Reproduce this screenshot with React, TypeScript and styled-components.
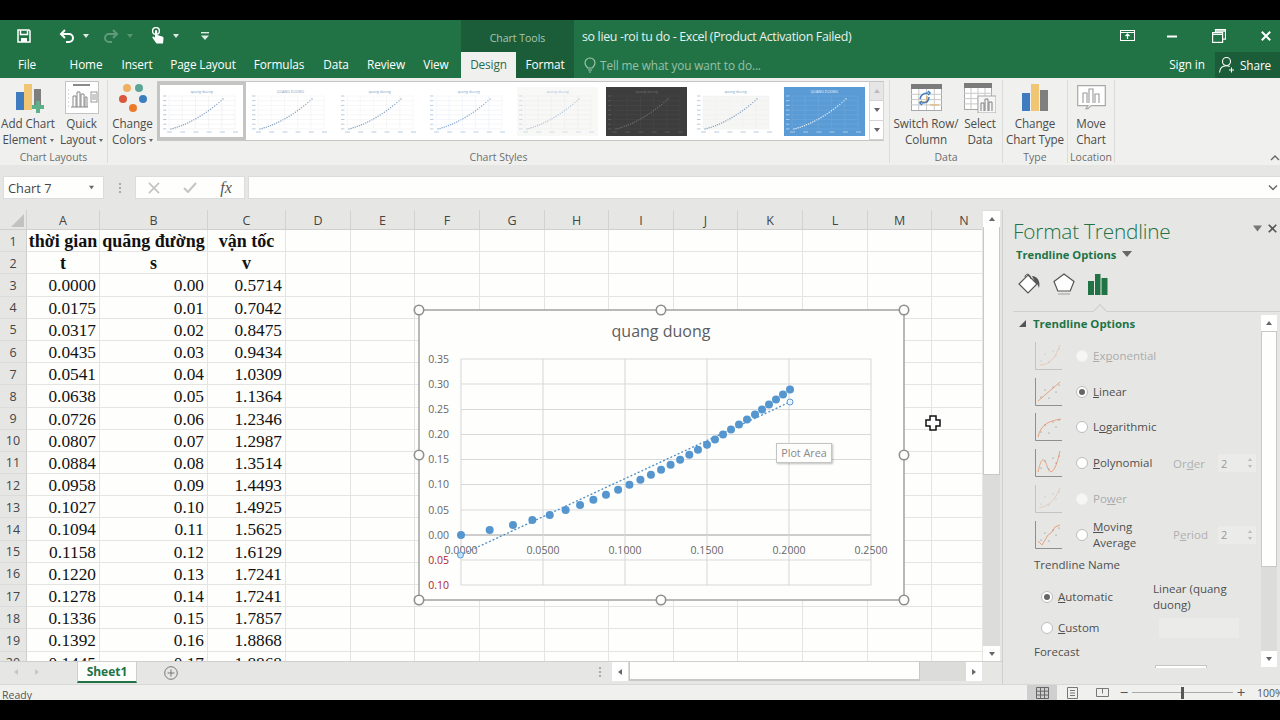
import React from "react";
import styled, { createGlobalStyle } from "styled-components";

const UI = `"Open Sans", "Noto Sans", "Liberation Sans", sans-serif`;
const GREEN = "#217346";
const DARK_GREEN = "#1c5d39";
const RIBBON = "#f0f1ef";
const SHELL = "#e6e7e5";

const Global = createGlobalStyle`
  html, body { margin: 0; padding: 0; background: #000; }
  * { box-sizing: border-box; }
  #root { width: 1280px; height: 720px; overflow: hidden; }
`;

const Frame = styled.div`
  width: 1280px; height: 720px; display: flex; flex-direction: column;
  background: #000; font-family: ${UI}; overflow: hidden;
`;
const BlackBand = styled.div`height: 20px; flex: none; background: #000;`;

/* Title bar */
const TitleRow = styled.div`height: 32px; flex: none; display: flex; background: ${GREEN}; color: #fff;`;
const Qat = styled.div`width: 461px; flex: none; display: flex; align-items: center;`;
const QatSlot = styled.div<{ $w: number; $ml: number; $dim?: boolean }>`
  width: ${p => p.$w}px; margin-left: ${p => p.$ml}px; display: flex; justify-content: center;
  align-items: center; height: 20px; opacity: ${p => (p.$dim ? 0.28 : 1)};
`;
const ChartToolsLabel = styled.div`
  width: 113px; flex: none; background: ${DARK_GREEN}; color: #a9c8b5; font-size: 10.5px;
  display: flex; align-items: center; justify-content: center; padding-top: 3px;
`;
const DocTitle = styled.div`
  flex: 1; padding: 1px 0 0 8px; font-size: 12.4px; line-height: 32px; color: #e8f1ec; white-space: nowrap; letter-spacing: -0.33px;
`;
const WinControls = styled.div`display: flex; align-items: center; width: 172px; flex: none;`;
const WinSlot = styled.div<{ $w: number; $pl?: number }>`
  width: ${p => p.$w}px; flex: none; display: flex; justify-content: center; align-items: center;
  padding-left: ${p => p.$pl ?? 0}px;
`;

const TabRow = styled.div`height: 26px; flex: none; display: flex; background: ${GREEN}; color: #fff; letter-spacing: -0.12px;`;
const Tab = styled.div<{ $w: number; $pl?: number; $mode?: "active" | "dark" }>`
  width: ${p => p.$w}px; flex: none; text-align: center; font-size: 11.8px; line-height: 25px;
  padding-left: ${p => p.$pl ?? 0}px;
  background: ${p => (p.$mode === "active" ? RIBBON : p.$mode === "dark" ? DARK_GREEN : "transparent")};
  color: ${p => (p.$mode === "active" ? "#2b6a48" : "#fff")};
`;
const TellMe = styled.div`
  flex: 1; display: flex; align-items: center; gap: 4px; padding-left: 10px; color: #98c0a9; font-size: 11.8px;
`;
const SignIn = styled.div`width: 60px; text-align: center; font-size: 11.8px; line-height: 25px; padding-left: 4px;`;
const ShareBtn = styled.div`
  width: 65px; flex: none; background: ${DARK_GREEN}; display: flex; align-items: center; gap: 4px;
  padding-left: 3px; font-size: 11.8px;
`;

/* Ribbon */
const Ribbon = styled.div`height: 87px; flex: none; display: flex; background: ${RIBBON}; color: #4c4c4c;`;
const Group = styled.div<{ $w: number }>`
  width: ${p => p.$w}px; flex: none; display: flex; flex-direction: column; border-right: 1px solid #dcdddb;
  margin: 2px 0;
`;
const GroupBody = styled.div`height: 69px; flex: none; display: flex;`;
const GroupLabel = styled.div`flex: 1; text-align: center; font-size: 10.5px; line-height: 16px; color: #6d6d6d; white-space: nowrap;`;
const RibbonBtn = styled.div<{ $w: number }>`
  width: ${p => p.$w}px; flex: none; display: flex; flex-direction: column; align-items: center;
`;
const BtnIcon = styled.div<{ $shift?: number }>`
  height: 35px; flex: none; display: flex; align-items: center; justify-content: center;
  padding-left: ${p => p.$shift ?? 0}px;
`;
const BtnLabel = styled.div`font-size: 11.7px; line-height: 16px; text-align: center; white-space: nowrap; letter-spacing: -0.1px;`;
const Caret = styled.span`
  display: inline-block; width: 0; height: 0; margin-left: 3px; vertical-align: 2px;
  border-left: 2.5px solid transparent; border-right: 2.5px solid transparent; border-top: 3px solid #666;
`;
const Gallery = styled.div`
  width: 727px; height: 60px; margin-top: 1px; flex: none; display: flex; background: #fff;
  border-top: 1px solid #c6c6c6; border-bottom: 1px solid #c6c6c6; box-shadow: inset 1px 0 0 #c6c6c6;
`;
const ThumbItem = styled.div<{ $sel?: boolean }>`
  width: 89px; flex: none; height: 58px; display: flex; align-items: center; justify-content: center;
  border: 3px solid ${p => (p.$sel ? "#c4c5c3" : "transparent")};
`;
const GalleryScroll = styled.div`
  width: 15px; flex: none; display: flex; flex-direction: column;
  border-left: 1px solid #d4d4d4; border-right: 1px solid #d4d4d4;
`;
const GalleryBtn = styled.div<{ $off?: boolean }>`
  flex: 1; display: flex; align-items: center; justify-content: center;
  background: ${p => (p.$off ? "#e6e6e6" : "#fff")}; border-bottom: 1px solid #d4d4d4;
`;
const RibbonEnd = styled.div`flex: 1; display: flex; justify-content: flex-end; align-items: flex-end;`;

/* Formula bar */
const FormulaBar = styled.div`
  height: 45px; flex: none; background: ${SHELL}; display: flex; align-items: flex-start; padding-top: 11px;
`;
const NameBox = styled.div`
  width: 101px; height: 23px; margin-left: 3px; background: #fefefd; display: flex; align-items: center;
  justify-content: space-between; padding: 0 9px 0 4px; font-size: 12.8px; color: #444;
  border: 1px solid #dcdcdc;
`;
const GripDots = styled.div`
  width: 31px; height: 23px; display: flex; flex-direction: column; gap: 2px; align-items: center; justify-content: center;
  span { width: 2px; height: 2px; background: #aaa; }
`;
const FxBox = styled.div`
  width: 110px; height: 23px; background: #fefefd; display: flex; align-items: center; border: 1px solid #dcdcdc;
`;
const FxSlot = styled.div`flex: 1; display: flex; justify-content: center; align-items: center;`;
const FxGlyph = styled.span`font-family: "Liberation Serif", serif; font-style: italic; font-size: 16px; color: #555; font-weight: 400;`;
const FormulaInput = styled.div`
  flex: 1; height: 23px; margin-left: 3px; background: #fefefd; border: 1px solid #dcdcdc; border-right: 0;
  display: flex; align-items: center; justify-content: flex-end; padding-right: 2px;
`;

/* Sheet */
const Main = styled.div`height: 474px; flex: none; display: flex; background: ${SHELL};`;
const SheetArea = styled.div`width: 1003px; flex: none; display: flex; flex-direction: column; border-right: 1px solid #cfcfcf;`;
const SheetTop = styled.div`height: 451px; flex: none; display: flex;`;
const GridWrap = styled.div`width: 982px; flex: none; position: relative; overflow: hidden; background: #fefefd;`;
const Grid = styled.div`
  display: grid; grid-template-columns: 27px 73px 108px 78px 65px 64px 65px 65px 64px 65px 64px 65px 65px 64px 65px;
  grid-template-rows: 20px; grid-auto-rows: 22.2px;
`;
const Corner = styled.div`
  background: ${SHELL}; border-right: 1px solid #cfcfcf; border-bottom: 1px solid #cfcfcf; position: relative;
  &::after {
    content: ""; position: absolute; right: 2px; bottom: 2px; width: 0; height: 0;
    border-left: 13px solid transparent; border-bottom: 13px solid #c2c2c2;
  }
`;
const ColHead = styled.div`
  background: ${SHELL}; color: #444; font-size: 12.5px; line-height: 21px; text-align: center;
  border-right: 1px solid #d2d2d2; border-bottom: 1px solid #cfcfcf; overflow: hidden;
`;
const RowHead = styled.div`
  background: ${SHELL}; color: #444; font-size: 12.5px; display: flex; align-items: center; justify-content: center;
  padding-top: 1px; border-right: 1px solid #cfcfcf; border-bottom: 1px solid #dcdcdc;
`;
const Cell = styled.div<{ $head?: boolean }>`
  font-family: "Liberation Serif", serif; font-size: ${p => (p.$head ? 18 : 17.3)}px; color: #111; white-space: nowrap;
  font-weight: ${p => (p.$head ? 700 : 400)}; text-align: ${p => (p.$head ? "center" : "right")};
  padding: 0 ${p => (p.$head ? 0 : 3)}px 0 0; line-height: 23px; border-right: 1px solid #e4e4e2; border-bottom: 1px solid #e4e4e2;
`;
const ChartLayer = styled.svg`position: absolute; left: 410px; top: 90px; width: 504px; height: 310px;`;
const CursorLayer = styled.svg`position: absolute; left: 925px; top: 205px; width: 16px; height: 16px;`;
const PlotTip = styled.div`
  position: absolute; left: 776px; top: 233px; width: 56px; height: 20px; background: #fdfdfb; border: 1px solid #c4c4c4;
  box-shadow: 1px 1px 2px rgba(0,0,0,.25); font-size: 10.8px; color: #8a8a8a; line-height: 18px; text-align: center;
`;
const VScroll = styled.div`
  width: 17px; margin-left: 1px; flex: none; display: flex; flex-direction: column; padding-top: 1px; background: #dcdddb;
`;
const ScrollBtn = styled.div<{ $h: number }>`
  height: ${p => p.$h}px; flex: none; background: #fff; display: flex; align-items: center; justify-content: center;
`;
const VThumb = styled.div<{ $h: number }>`
  height: ${p => p.$h}px; flex: none; background: #fefefd; border: 1px solid #c8c8c8; border-top: 0;
`;
const Track = styled.div`flex: 1; background: #dcdddb;`;

const SheetBottom = styled.div`flex: 1; display: flex; align-items: flex-start; border-top: 1px solid #cfcfcf;`;
const NavArrow = styled.div<{ $w: number }>`width: ${p => p.$w}px; height: 20px; flex: none; display: flex; align-items: center; justify-content: center;`;
const SheetTab = styled.div`
  width: 60px; flex: none; height: 21px; margin-left: 2px; background: #fefefd; border: 1px solid #cfcfcf; border-top: 0;
  border-bottom: 2px solid ${GREEN}; color: ${GREEN}; font-weight: 700; font-size: 12px; line-height: 20px; text-align: center;
`;
const AddSheet = styled.div`
  width: 14px; height: 14px; margin: 4px 0 0 27px; flex: none; display: flex; align-items: center; justify-content: center;
`;
const HScrollGrip = styled(GripDots)`width: 10px; height: 20px; margin-left: 417px; flex: none;`;
const HScroll = styled.div`width: 370px; height: 19px; margin-left: 7px; flex: none; display: flex; align-items: stretch; background: #dcdddb;`;
const HBtn = styled.div`width: 16px; flex: none; background: #fff; display: flex; align-items: center; justify-content: center;`;
const HThumb = styled.div`width: 291px; flex: none; margin-left: 1px; background: #fefefd; border: 1px solid #c8c8c8; border-top: 0; border-bottom: 2px solid #c8c8c8;`;

/* Pane */
const Pane = styled.div`flex: 1; display: flex; flex-direction: column; padding-left: 10px; overflow: hidden; color: #4a4a4a;`;
const PaneTitleRow = styled.div`height: 36px; flex: none; display: flex; padding-top: 8px;`;
const PaneTitle = styled.div`flex: 1; font-size: 20.8px; font-weight: 300; line-height: 26px; color: ${GREEN}; white-space: nowrap; letter-spacing: -0.2px;`;
const PaneClose = styled.div`width: 27px; flex: none; display: flex; align-items: flex-start; justify-content: space-between; padding: 6px 3px 0 0;`;
const PaneSub = styled.div`
  height: 16px; flex: none; margin-left: 3px; display: flex; align-items: center; gap: 6px; color: ${GREEN};
  font-size: 11.2px; font-weight: 700;
`;
const SubCaret = styled.span`width: 0; height: 0; border-left: 5px solid transparent; border-right: 5px solid transparent; border-top: 6px solid #666;`;
const PaneIcons = styled.div`height: 24px; margin-top: 10px; flex: none; display: flex; align-items: center;`;
const PaneIconSlot = styled.div`width: 34px; flex: none; display: flex; justify-content: center;`;
const PaneDivider = styled.div`
  height: 1px; flex: none; margin-top: 15px; background: #d0d0ce; position: relative;
  &::after {
    content: ""; position: absolute; left: 82px; top: -5px; width: 9px; height: 9px; transform: rotate(45deg);
    background: ${SHELL}; border-left: 1px solid #d0d0ce; border-top: 1px solid #d0d0ce;
  }
`;
const PaneBody = styled.div`height: 354px; margin-top: 3px; flex: none; display: flex; overflow: hidden;`;
const PaneContent = styled.div`width: 247px; height: 353px; overflow: hidden; flex: none; display: flex; flex-direction: column;`;
const SectionHead = styled.div`
  height: 16px; flex: none; display: flex; align-items: center; gap: 7px; padding-left: 6px; color: ${GREEN};
  font-size: 11.4px; font-weight: 700;
`;
const SectionTri = styled.span`width: 0; height: 0; border-left: 7px solid transparent; border-bottom: 7px solid #555;`;
const Options = styled.div`margin-top: 7px; display: grid; grid-auto-rows: 35.8px;`;
const OptRow = styled.div`display: flex; align-items: center; padding-left: 22px; font-size: 11.5px;`;
const OptIcon = styled.div<{ $off?: boolean }>`width: 28px; flex: none; display: flex; opacity: ${p => (p.$off ? 0.4 : 1)};`;
const Radio = styled.div<{ $on?: boolean; $off?: boolean }>`
  width: 12px; height: 12px; border-radius: 50%; flex: none; position: relative;
  background: ${p => (p.$off ? "#f6f6f5" : "#fff")}; border: 1px solid ${p => (p.$off ? "#f0f0ef" : "#bdbdbd")};
  &::after {
    content: ""; display: ${p => (p.$on ? "block" : "none")}; position: absolute; left: 2px; top: 2px;
    width: 6px; height: 6px; border-radius: 50%; background: #666;
  }
`;
const OptRadio = styled(Radio)`margin-left: 13px;`;
const OptText = styled.div<{ $off?: boolean }>`
  margin-left: 5px; line-height: 16px; color: ${p => (p.$off ? "#ababab" : "#4f4f4f")}; width: 80px; flex: none; white-space: nowrap;
`;
const Key = styled.span`text-decoration: underline; text-underline-offset: 1px;`;
const OrderLabel = styled.div`width: 45px; flex: none; color: #b0b0b0; white-space: nowrap;`;
const Spin = styled.div`
  width: 38px; height: 18px; flex: none; background: #ebebea; display: flex; align-items: center;
  justify-content: space-between; padding: 0 4px 0 3px; color: #999; font-size: 11px;
`;
const SpinArrows = styled.div`display: flex; flex-direction: column; gap: 4px;
  i { display: block; width: 0; height: 0; border-left: 2.5px solid transparent; border-right: 2.5px solid transparent; }
  i:first-child { border-bottom: 3px solid #bbb; }
  i:last-child { border-top: 3px solid #bbb; }
`;
const FieldLabel = styled.div<{ $mt: number }>`height: 16px; flex: none; margin: ${p => p.$mt}px 0 0 21px; font-size: 11.5px; line-height: 16px; color: #4f4f4f;`;
const NameRows = styled.div`display: grid; grid-template-columns: 112px 130px; grid-template-rows: 36px 26px; margin: 6px 0 0 28px; font-size: 11.5px; color: #4f4f4f;`;
const NameChoice = styled.div`display: flex; align-items: center; gap: 5px;`;
const LinearName = styled.div`line-height: 16px; padding-top: 2px;`;
const CustomInput = styled.div`width: 80px; height: 20px; margin: 3px 0 0 6px; background: #ebebea;`;
const ForecastBox = styled.div`width: 52px; height: 12px; margin: 5px 0 0 142px; flex: none; background: #fff; border: 1px solid #c6c6c6;`;
const PaneScroll = styled.div`width: 16px; height: 352px; margin-left: 1px; flex: none; display: flex; flex-direction: column; background: #d9dad8;`;
const PaneThumb = styled.div`height: 236px; flex: none; background: #fefefd; border: 1px solid #c8c8c8;`;

/* Status */
const Status = styled.div`
  height: 16px; flex: none; background: ${RIBBON}; border-top: 1px solid #d8d8d6; display: flex;
  overflow: hidden; color: #555; font-size: 10.5px;
`;
const Ready = styled.div`flex: 1; padding-left: 2px; line-height: 21px;`;
const StatusTools = styled.div`width: 253px; flex: none; display: flex; align-items: flex-start;`;
const ViewBtn = styled.div<{ $on?: boolean }>`
  width: 30px; height: 16px; flex: none; display: flex; align-items: center; justify-content: center;
  background: ${p => (p.$on ? "#cfcfcf" : "transparent")};
`;
const ZoomTrack = styled.div`
  width: 101px; height: 16px; flex: none; margin: 0 1px; position: relative;
  &::before { content: ""; position: absolute; left: 0; right: 0; top: 7px; height: 1px; background: #aaa; }
  &::after { content: ""; position: absolute; left: 49px; top: 2px; width: 3px; height: 12px; background: #555; }
`;
const ZoomSign = styled.div`width: 14px; flex: none; text-align: center; font-size: 15px; line-height: 14px; color: #555;`;
const ZoomPct = styled.div`margin-left: 9px; line-height: 17px; font-size: 10.5px; white-space: nowrap;`;

/* Drawings */
const Tri = ({ dir, c = "#666", s = 6 }: { dir: "u" | "d" | "l" | "r"; c?: string; s?: number }) => {
  const pts = { u: "0,5 3,1 6,5", d: "0,1 6,1 3,5", l: "5,0 5,6 1,3", r: "1,0 1,6 5,3" }[dir];
  return <svg width={s} height={s} viewBox="0 0 6 6"><polygon points={pts} fill={c} /></svg>;
};

const MiniCaret = () => <svg width="6" height="4" viewBox="0 0 6 4"><polygon points="0,0 6,0 3,4" fill="#fff" fillOpacity=".85" /></svg>;

const SaveIcon = () => (
  <svg width="16" height="16" viewBox="0 0 16 16" fill="none" stroke="#fff" strokeWidth="1.5">
    <path d="M2 2h11l1 1v11H2z" /><path d="M4.5 2.5v4h7v-4" /><rect x="5" y="10" width="6" height="4" fill="#fff" stroke="none" />
  </svg>
);
const UndoIcon = ({ flip }: { flip?: boolean }) => (
  <svg width="18" height="16" viewBox="0 0 18 16" fill="none" stroke="#fff" strokeWidth="2" style={flip ? { transform: "scaleX(-1)" } : undefined}>
    <path d="M7 2 3 6l4 4" /><path d="M3 6h8a4 4 0 0 1 0 8H8" />
  </svg>
);
const TouchIcon = () => (
  <svg width="16" height="18" viewBox="0 0 16 18" fill="#fff">
    <circle cx="6" cy="4" r="3.4" fill="none" stroke="#fff" strokeWidth="1.4" />
    <path d="M5 4.2a1.1 1.1 0 0 1 2.2 0V8l5 1.4c1 .3 1.4 1 1.3 2l-.5 5H6.5L2.6 11c-.7-1 .5-2.1 1.4-1.2l1 1z" />
  </svg>
);
const CustomizeIcon = () => (
  <svg width="8" height="9" viewBox="0 0 8 9" fill="#fff" fillOpacity=".85"><rect x="0" y="0" width="8" height="1.4" /><polygon points="0,3.5 8,3.5 4,8" /></svg>
);
const RibbonModeIcon = () => (
  <svg width="15" height="12" viewBox="0 0 15 12" fill="none" stroke="#fff" strokeWidth="1"><rect x=".5" y=".5" width="14" height="10" /><path d="M.5 2.5h14" /><path d="M7.5 9V4M5.5 6l2-2 2 2" strokeWidth="1.2" /></svg>
);
const Minimize = () => <svg width="12" height="3" viewBox="0 0 12 3"><rect width="10" height="2" y=".5" x="1" fill="#fff" /></svg>;
const Restore = () => (
  <svg width="14" height="14" viewBox="0 0 14 14" fill="none" stroke="#fff" strokeWidth="1.2"><rect x=".6" y="3.6" width="10" height="9.8" /><path d="M.6 5.4h10M3.5 3.5V.7h10v9.5h-2.8M3.5 2.2h10" /></svg>
);
const CloseX = ({ c = "#fff", s = 10, w = 2 }: { c?: string; s?: number; w?: number }) => (
  <svg width={s} height={s} viewBox="0 0 10 10" stroke={c} strokeWidth={w}><path d="M.8.8l8.4 8.4M9.2.8.8 9.2" /></svg>
);
const Bulb = () => (
  <svg width="12" height="16" viewBox="0 0 12 16" fill="none" stroke="#a3cab4" strokeWidth="1.1"><path d="M3.6 11C2.5 9.3 1 8.3 1 6a5 5 0 0 1 10 0c0 2.3-1.5 3.3-2.6 5z" /><path d="M4 13h4M5 15h2" /></svg>
);
const ShareUser = () => (
  <svg width="18" height="18" viewBox="0 0 18 18" fill="none" stroke="#fff" strokeWidth="1.1"><circle cx="8.5" cy="5.5" r="4" /><path d="M1.5 16.5c.3-4 3-6.8 7-6.8 1.3 0 2.3.3 3.2.8" /><path d="M13.5 11.5v5M11 14h5" /></svg>
);

const AddChartIcon = () => (
  <svg width="32" height="30" viewBox="0 0 32 30"><rect x="1" y="9" width="8" height="18" fill="#3f7cbf" /><rect x="9" y="1" width="8" height="26" fill="#f0c674" /><rect x="19" y="6" width="7" height="16" fill="#7f7f7f" /><path d="M21 18h4v4h4v4h-4v4h-4v-4h-4v-4h4z" fill="#5cb08a" /></svg>
);
const QuickLayoutIcon = () => (
  <svg width="34" height="33" viewBox="0 0 34 33" fill="none"><rect x=".5" y=".5" width="33" height="32" fill="#fff" stroke="#c4c4c4" /><rect x="8" y="3" width="17" height="2" fill="#8a8a8a" /><path d="M3 9h1M3 13h1M3 17h1M3 21h1M3 25h1" stroke="#bbb" /><path d="M6 26h17M8 26V15h3v11M12 26V11h3v15M16 26V13h3v13M20 26V16h2v10" stroke="#888" /><rect x="26" y="11" width="6" height="10" fill="#fff" stroke="#999" /><path d="M27 14h4M27 16h4M27 18h4" stroke="#999" /></svg>
);
const ChangeColorsIcon = () => (
  <svg width="30" height="30" viewBox="0 0 30 30"><circle cx="9" cy="5" r="4" fill="#efb062" /><circle cx="21" cy="5" r="4" fill="#5ca596" /><circle cx="5" cy="16" r="4" fill="#d9573a" /><circle cx="25" cy="16" r="4" fill="#3c7ebd" /><circle cx="15" cy="25" r="4" fill="#ec7a2b" /></svg>
);
const TableBase = ({ w }: { w: number }) => (
  <>
    <rect x=".5" y=".5" width={w - 1} height="26" fill="#fff" stroke="#a8a8a8" />
    <rect x="0" y="0" width={w} height="5" fill="#7b7b7b" />
    {[1, 2, 3].map(i => <path key={i} d={`M${(i * w) / 4} 5V26`} stroke="#c8c8c8" />)}
    {[1, 2, 3].map(i => <path key={i} d={`M0 ${5 + i * 5.3}H${w}`} stroke="#c8c8c8" />)}
  </>
);
const SwitchIcon = () => (
  <svg width="31" height="27" viewBox="0 0 31 27" fill="none"><TableBase w={31} /><path d="M8 18h8V12" stroke="#e0ad63" strokeWidth="1.5" /><path d="M19 21h9" stroke="#e0ad63" /><path d="M9 15c1-5 4-6 8-6M17 7l2 2-2 2M18 13c0 4-3 6-7 6M11 17l-2 2 2 2" stroke="#3f7cbf" strokeWidth="1.5" /></svg>
);
const SelectDataIcon = () => (
  <svg width="32" height="30" viewBox="0 0 32 30" fill="none"><TableBase w={28} /><rect x="14" y="13" width="18" height="17" fill="#f6f6f6" stroke="#a8a8a8" /><path d="M17 28v-8h3v8M21 28V16h3v12M25 28v-9h3v9" stroke="#7f7f7f" /></svg>
);
const ChangeTypeIcon = () => (
  <svg width="26" height="27" viewBox="0 0 26 27"><rect x="0" y="9" width="8" height="18" fill="#3f7cbf" /><rect x="9" y="0" width="8" height="27" fill="#f0c674" /><rect x="18" y="6" width="8" height="21" fill="#7f7f7f" /></svg>
);
const MoveChartIcon = () => (
  <svg width="29" height="25" viewBox="0 0 29 25" fill="none"><path d="M.7.7h27.6v20H14l-3 3H9l2-3H.7z" fill="#fff" stroke="#a8a8a8" strokeWidth="1.2" /><path d="M6 18V8h4v10M12 18V4h4v14M18 18V9h4v9" stroke="#9a9a9a" strokeWidth="1.1" /></svg>
);

const MiniChart = ({ bg, grid, dot, title, fade }: { bg: string; grid: string; dot: string; title: string; fade?: string }) => {
  const pts = Array.from({ length: 26 }, (_, i) => {
    const t = i / 25;
    return [10 + t * 52, 42 - (t * 0.45 + t * t * 0.55) * 30];
  });
  return (
    <svg width="81" height="49" viewBox="0 0 81 49">
      <rect width="81" height="49" fill={bg} />
      {fade && <rect x="8" y="9" width="66" height="33" fill={fade} />}
      {[0, 1, 2, 3, 4, 5, 6, 7].map(i => <path key={i} d={`M8 ${9 + i * 4.7}H74`} stroke={grid} strokeWidth=".5" />)}
      {[0, 1, 2, 3, 4, 5].map(i => <path key={i} d={`M${8 + i * 13.2} 9V42`} stroke={grid} strokeWidth=".5" />)}
      {pts.map((p, i) => <circle key={i} cx={p[0]} cy={p[1]} r=".7" fill={dot} />)}
      {[0, 1, 2, 3, 4, 5].map(i => <rect key={i} x={6 + i * 13.2} y="44.5" width="5" height="1" fill={dot} fillOpacity=".55" />)}
      {[0, 1, 2, 3, 4, 5, 6, 7].map(i => <rect key={i} x="2" y={8.5 + i * 4.7} width="3.5" height="1" fill={dot} fillOpacity=".55" />)}
      <text x="40.5" y="5.5" textAnchor="middle" fontSize="3.6" fontFamily="Open Sans" fill={dot}>{title}</text>
    </svg>
  );
};

const BucketIcon = () => (
  <svg width="24" height="24" viewBox="0 0 24 24" fill="none"><path d="M10 3 19 12 10 21 1 12z" fill="#fff" stroke="#555" strokeWidth="1.2" /><path d="M7 5c0-3 4-4 5-1l1 3" stroke="#555" strokeWidth="1" /><path d="M14 4c5 0 9 5 7 12-1-3-2-5-4-6z" fill="#555" /></svg>
);
const PentagonIcon = () => (
  <svg width="22" height="22" viewBox="0 0 22 22" fill="#fff" stroke="#555" strokeWidth="1.2"><path d="M11 1 21 8.5 17.2 18H4.8L1 8.5z" /><path d="M5 21h12" stroke="#aaa" /></svg>
);
const BarsIcon = () => (
  <svg width="20" height="21" viewBox="0 0 20 21" fill={GREEN}><rect x="0" y="7" width="6" height="14" /><rect x="7" y="0" width="5.5" height="21" /><rect x="13.5" y="4" width="6" height="17" /></svg>
);

const TrendIcon = ({ kind }: { kind: string }) => {
  const curve: Record<string, string> = {
    exp: "M5 24C14 24 20 18 25 4",
    lin: "M3 24 25 5",
    log: "M3 25C6 12 14 9 26 7",
    poly: "M3 24C6 10 9 8 12 18S20 26 25 3",
    pow: "M4 24C14 22 20 16 25 4",
    mov: "M3 21l4 4 6-10 4-3 3-5 5-2",
  };
  return (
    <svg width="27" height="30" viewBox="0 0 27 30" fill="none">
      <path d="M.5 1v27.5H27" stroke="#8f8f8f" />
      <path d={curve[kind]} stroke="#e8a27c" strokeWidth="1" />
      {[[6, 20], [10, 13], [14, 21], [18, 10], [21, 15], [24, 8]].map(([x, y], i) => <circle key={i} cx={x} cy={y} r=".6" fill="#777" />)}
    </svg>
  );
};

/* Data */
const COLS = ["A", "B", "C", "D", "E", "F", "G", "H", "I", "J", "K", "L", "M", "N"];
const ROWS: string[][] = [
  ["0.0000", "0.00", "0.5714"], ["0.0175", "0.01", "0.7042"], ["0.0317", "0.02", "0.8475"], ["0.0435", "0.03", "0.9434"],
  ["0.0541", "0.04", "1.0309"], ["0.0638", "0.05", "1.1364"], ["0.0726", "0.06", "1.2346"], ["0.0807", "0.07", "1.2987"],
  ["0.0884", "0.08", "1.3514"], ["0.0958", "0.09", "1.4493"], ["0.1027", "0.10", "1.4925"], ["0.1094", "0.11", "1.5625"],
  ["0.1158", "0.12", "1.6129"], ["0.1220", "0.13", "1.7241"], ["0.1278", "0.14", "1.7241"], ["0.1336", "0.15", "1.7857"],
  ["0.1392", "0.16", "1.8868"], ["0.1445", "0.17", "1.8868"],
];
const extraX = [707, 715, 723, 731, 739, 747, 755, 762, 769, 776, 783, 790];
const dotsData: [number, number][] = [
  ...ROWS.map((r, i): [number, number] => [461 + parseFloat(r[0]) * 1640, 535 - i * 5.02]),
  ...extraX.map((x, i): [number, number] => [x, 535 - (i + 18) * 5.02]),
];
const yTicks = [["0.35", 359], ["0.30", 384], ["0.25", 409.5], ["0.20", 434.5], ["0.15", 459.5], ["0.10", 484.5], ["0.05", 510], ["0.00", 535], ["0.05", 560], ["0.10", 585]] as [string, number][];
const xLines = [461, 543, 625, 707, 789, 871];
const xLabels = ["0.0000", "0.0500", "0.1000", "0.1500", "0.2000", "0.2500"];
const handles: [number, number][] = [[419, 310], [661, 310], [904, 310], [419, 455], [904, 455], [419, 600], [661, 600], [904, 600]];

const ChartDrawing = () => (
  <ChartLayer viewBox="410 300 504 310">
    <rect x="419" y="310" width="485" height="290" fill="#fefefd" stroke="#a8a8a6" strokeWidth="1.6" />
    <text x="661" y="337" textAnchor="middle" fontSize="16" fontFamily="Open Sans" fill="#5d5d5d">quang duong</text>
    {yTicks.map(([, y], i) => <path key={i} d={`M461 ${y}H871`} stroke={i === 7 ? "#bdbdbd" : "#d9d9d9"} strokeWidth={i === 7 ? 1.5 : 1} />)}
    {xLines.map(x => <path key={x} d={`M${x} 359V585`} stroke="#d5d5d5" />)}
    {yTicks.map(([t, y], i) => (
      <text key={i} x="449" y={y + 3.8} textAnchor="end" fontSize="10.5" fontFamily="Open Sans" fill={i > 7 ? "#b01c2e" : "#666"}>{t}</text>
    ))}
    {xLabels.map((t, i) => <text key={t} x={xLines[i]} y="553.8" textAnchor="middle" fontSize="10.5" fontFamily="Open Sans" fill="#666">{t}</text>)}
    <path d="M460.5 555 790 402" stroke="#4f8fc6" strokeWidth="1.4" strokeDasharray="0.8 3.2" strokeLinecap="round" />
    {dotsData.map(([x, y], i) => <circle key={i} cx={x} cy={y} r="4" fill="#5596cf" />)}
    <circle cx="460.5" cy="555" r="3" fill="#bfe0f8" stroke="#5b9bd5" />
    <circle cx="790" cy="402" r="3" fill="#e8f4fc" stroke="#5b9bd5" />
    {handles.map(([x, y], i) => <circle key={i} cx={x} cy={y} r="4.7" fill="#fefefd" stroke="#8f8f8d" strokeWidth="1.6" />)}
  </ChartLayer>
);

const options = [
  { kind: "exp", off: true, label: <><Key>E</Key>x<Key>p</Key>onential</> },
  { kind: "lin", on: true, label: <><Key>L</Key>inear</> },
  { kind: "log", label: <>L<Key>o</Key>garithmic</> },
  { kind: "poly", label: <><Key>P</Key>olynomial</>, extra: <>Or<Key>d</Key>er</> },
  { kind: "pow", off: true, label: <>Po<Key>w</Key>er</> },
  { kind: "mov", label: <><Key>M</Key>oving<br />Average</>, extra: <>P<Key>e</Key>riod</> },
];

export default function App() {
  return (
    <Frame>
      <Global />
      <BlackBand />
      <TitleRow>
        <Qat>
          <QatSlot $w={16} $ml={16}><SaveIcon /></QatSlot>
          <QatSlot $w={18} $ml={26}><UndoIcon /></QatSlot>
          <QatSlot $w={8} $ml={6}><MiniCaret /></QatSlot>
          <QatSlot $w={18} $ml={12} $dim><UndoIcon flip /></QatSlot>
          <QatSlot $w={8} $ml={6} $dim><MiniCaret /></QatSlot>
          <QatSlot $w={18} $ml={15}><TouchIcon /></QatSlot>
          <QatSlot $w={8} $ml={5}><MiniCaret /></QatSlot>
          <QatSlot $w={8} $ml={21}><CustomizeIcon /></QatSlot>
        </Qat>
        <ChartToolsLabel>Chart Tools</ChartToolsLabel>
        <DocTitle>so lieu -roi tu do - Excel (Product Activation Failed)</DocTitle>
        <WinControls>
          <WinSlot $w={38}><RibbonModeIcon /></WinSlot>
          <WinSlot $w={52}><Minimize /></WinSlot>
          <WinSlot $w={42}><Restore /></WinSlot>
          <WinSlot $w={40} $pl={12}><CloseX /></WinSlot>
        </WinControls>
      </TitleRow>
      <TabRow>
        <Tab $w={54}>File</Tab>
        <Tab $w={64}>Home</Tab>
        <Tab $w={38}>Insert</Tab>
        <Tab $w={94}>Page Layout</Tab>
        <Tab $w={58}>Formulas</Tab>
        <Tab $w={56}>Data</Tab>
        <Tab $w={44}>Review</Tab>
        <Tab $w={53} $pl={3}>View</Tab>
        <Tab $w={55} $mode="active">Design</Tab>
        <Tab $w={58} $mode="dark">Format</Tab>
        <TellMe><Bulb />Tell me what you want to do...</TellMe>
        <SignIn>Sign in</SignIn>
        <ShareBtn><ShareUser />Share</ShareBtn>
      </TabRow>
      <Ribbon>
        <Group $w={108}>
          <GroupBody>
            <RibbonBtn $w={56}>
              <BtnIcon $shift={5}><AddChartIcon /></BtnIcon>
              <BtnLabel>Add Chart<br />Element<Caret /></BtnLabel>
            </RibbonBtn>
            <RibbonBtn $w={51}>
              <BtnIcon><QuickLayoutIcon /></BtnIcon>
              <BtnLabel>Quick<br />Layout<Caret /></BtnLabel>
            </RibbonBtn>
          </GroupBody>
          <GroupLabel>Chart Layouts</GroupLabel>
        </Group>
        <Group $w={782}>
          <GroupBody>
            <RibbonBtn $w={49}>
              <BtnIcon><ChangeColorsIcon /></BtnIcon>
              <BtnLabel>Change<br />Colors<Caret /></BtnLabel>
            </RibbonBtn>
            <Gallery>
              <ThumbItem $sel><MiniChart bg="#fff" grid="#e8e8e8" dot="#7f9fc0" title="quang duong" /></ThumbItem>
              <ThumbItem><MiniChart bg="#fff" grid="#eee" dot="#7f9fc0" title="QUANG DUONG" /></ThumbItem>
              <ThumbItem><MiniChart bg="#fff" grid="#eee" dot="#7f9fc0" title="quang duong" /></ThumbItem>
              <ThumbItem><MiniChart bg="#fff" grid="#e6ecf4" dot="#7fa8d4" title="quang duong" /></ThumbItem>
              <ThumbItem><MiniChart bg="#f8f8f7" grid="#ececec" dot="#b0c4d8" title="quang duong" /></ThumbItem>
              <ThumbItem><MiniChart bg="#3d3d3d" grid="#4a4a4a" dot="#6e6e6e" title="quang duong" /></ThumbItem>
              <ThumbItem><MiniChart bg="#fff" grid="#eee" dot="#7f9fc0" fade="#f6f6f4" title="quang duong" /></ThumbItem>
              <ThumbItem><MiniChart bg="#5b9bd5" grid="#6ea8dc" dot="#eaf3fb" title="QUANG DUONG" /></ThumbItem>
              <GalleryScroll>
                <GalleryBtn $off><Tri dir="u" c="#bbb" /></GalleryBtn>
                <GalleryBtn><Tri dir="d" /></GalleryBtn>
                <GalleryBtn><Tri dir="d" /></GalleryBtn>
              </GalleryScroll>
            </Gallery>
          </GroupBody>
          <GroupLabel>Chart Styles</GroupLabel>
        </Group>
        <Group $w={113}>
          <GroupBody>
            <RibbonBtn $w={72}>
              <BtnIcon><SwitchIcon /></BtnIcon>
              <BtnLabel>Switch Row/<br />Column</BtnLabel>
            </RibbonBtn>
            <RibbonBtn $w={36}>
              <BtnIcon><SelectDataIcon /></BtnIcon>
              <BtnLabel>Select<br />Data</BtnLabel>
            </RibbonBtn>
          </GroupBody>
          <GroupLabel>Data</GroupLabel>
        </Group>
        <Group $w={65}>
          <GroupBody>
            <RibbonBtn $w={64}>
              <BtnIcon><ChangeTypeIcon /></BtnIcon>
              <BtnLabel>Change<br />Chart Type</BtnLabel>
            </RibbonBtn>
          </GroupBody>
          <GroupLabel>Type</GroupLabel>
        </Group>
        <Group $w={47}>
          <GroupBody>
            <RibbonBtn $w={46}>
              <BtnIcon><MoveChartIcon /></BtnIcon>
              <BtnLabel>Move<br />Chart</BtnLabel>
            </RibbonBtn>
          </GroupBody>
          <GroupLabel>Location</GroupLabel>
        </Group>
        <RibbonEnd>
          <svg width="10" height="14" viewBox="0 0 10 6" fill="none" stroke="#666" strokeWidth="1.4"><path d="M1 5l4-4 4 4" /></svg>
        </RibbonEnd>
      </Ribbon>
      <FormulaBar>
        <NameBox>Chart 7<Tri dir="d" s={5} /></NameBox>
        <GripDots><span /><span /><span /></GripDots>
        <FxBox>
          <FxSlot><CloseX c="#c4c4c4" s={12} w={1.4} /></FxSlot>
          <FxSlot><svg width="14" height="11" viewBox="0 0 14 11" fill="none" stroke="#c4c4c4" strokeWidth="2"><path d="M1 6l4 4 8-9" /></svg></FxSlot>
          <FxSlot><FxGlyph>fx</FxGlyph></FxSlot>
        </FxBox>
        <FormulaInput>
          <svg width="10" height="7" viewBox="0 0 10 6" fill="none" stroke="#666" strokeWidth="1.4"><path d="M1 1l4 4 4-4" /></svg>
        </FormulaInput>
      </FormulaBar>
      <Main>
        <SheetArea>
          <SheetTop>
            <GridWrap>
              <Grid>
                <Corner />
                {COLS.map(c => <ColHead key={c}>{c}</ColHead>)}
                <RowHead>1</RowHead>
                <Cell $head>thời gian</Cell><Cell $head>quãng đường</Cell><Cell $head>vận tốc</Cell>
                {COLS.slice(3).map(c => <Cell key={c} />)}
                <RowHead>2</RowHead>
                <Cell $head>t</Cell><Cell $head>s</Cell><Cell $head>v</Cell>
                {COLS.slice(3).map(c => <Cell key={c} />)}
                {ROWS.map((r, i) => (
                  <React.Fragment key={i}>
                    <RowHead>{i + 3}</RowHead>
                    {r.map((v, j) => <Cell key={j}>{v}</Cell>)}
                    {COLS.slice(3).map(c => <Cell key={c} />)}
                  </React.Fragment>
                ))}
              </Grid>
              <ChartDrawing />
              <PlotTip>Plot Area</PlotTip>
              <CursorLayer viewBox="0 0 16 16">
                <path d="M5 1h6v4h4v6h-4v4H5v-4H1V5h4z" fill="#fff" stroke="#111" strokeWidth="1.5" />
              </CursorLayer>
            </GridWrap>
            <VScroll>
              <ScrollBtn $h={16}><Tri dir="u" /></ScrollBtn>
              <VThumb $h={248} />
              <Track />
              <ScrollBtn $h={15}><Tri dir="d" /></ScrollBtn>
            </VScroll>
          </SheetTop>
          <SheetBottom>
            <NavArrow $w={31}><Tri dir="l" c="#c6c6c6" /></NavArrow>
            <NavArrow $w={12}><Tri dir="r" c="#c6c6c6" /></NavArrow>
            <NavArrow $w={32} />
            <SheetTab>Sheet1</SheetTab>
            <AddSheet>
              <svg width="14" height="14" viewBox="0 0 14 14" fill="none" stroke="#777" strokeWidth="1"><circle cx="7" cy="7" r="6.3" /><path d="M7 3.5v7M3.5 7h7" /></svg>
            </AddSheet>
            <HScrollGrip><span /><span /><span /></HScrollGrip>
            <HScroll>
              <HBtn><Tri dir="l" /></HBtn>
              <HThumb />
              <Track />
              <HBtn><Tri dir="r" /></HBtn>
            </HScroll>
          </SheetBottom>
        </SheetArea>
        <Pane>
          <PaneTitleRow>
            <PaneTitle>Format Trendline</PaneTitle>
            <PaneClose>
              <Tri dir="d" c="#777" s={9} />
              <CloseX c="#555" s={9} w={1.8} />
            </PaneClose>
          </PaneTitleRow>
          <PaneSub>Trendline Options <SubCaret /></PaneSub>
          <PaneIcons>
            <PaneIconSlot><BucketIcon /></PaneIconSlot>
            <PaneIconSlot><PentagonIcon /></PaneIconSlot>
            <PaneIconSlot><BarsIcon /></PaneIconSlot>
          </PaneIcons>
          <PaneDivider />
          <PaneBody>
            <PaneContent>
              <SectionHead><SectionTri />Trendline Options</SectionHead>
              <Options>
                {options.map(o => (
                  <OptRow key={o.kind}>
                    <OptIcon $off={o.off}><TrendIcon kind={o.kind} /></OptIcon>
                    <OptRadio $on={o.on} $off={o.off} />
                    <OptText $off={o.off}>{o.label}</OptText>
                    {o.extra && <OrderLabel>{o.extra}</OrderLabel>}
                    {o.extra && <Spin>2<SpinArrows><i /><i /></SpinArrows></Spin>}
                  </OptRow>
                ))}
              </Options>
              <FieldLabel $mt={4}>Trendline Name</FieldLabel>
              <NameRows>
                <NameChoice><Radio $on /><span><Key>A</Key>utomatic</span></NameChoice>
                <LinearName>Linear (quang<br />duong)</LinearName>
                <NameChoice><Radio /><span><Key>C</Key>ustom</span></NameChoice>
                <CustomInput />
              </NameRows>
              <FieldLabel $mt={3}>Forecast</FieldLabel>
              <ForecastBox />
            </PaneContent>
            <PaneScroll>
              <ScrollBtn $h={16}><Tri dir="u" /></ScrollBtn>
              <PaneThumb />
              <Track />
              <ScrollBtn $h={16}><Tri dir="d" /></ScrollBtn>
            </PaneScroll>
          </PaneBody>
        </Pane>
      </Main>
      <Status>
        <Ready>Ready</Ready>
        <StatusTools>
          <ViewBtn $on>
            <svg width="13" height="12" viewBox="0 0 13 12" fill="none" stroke="#666"><path d="M.5.5h12v11H.5zM.5 4.2h12M.5 8h12M4.5.5v11M8.5.5v11" /></svg>
          </ViewBtn>
          <ViewBtn>
            <svg width="11" height="12" viewBox="0 0 11 12" fill="none" stroke="#777"><path d="M.5.5h10v11H.5zM3 3.5h5M3 6h5M3 8.5h5" /></svg>
          </ViewBtn>
          <ViewBtn>
            <svg width="13" height="11" viewBox="0 0 13 11" fill="none" stroke="#777"><path d="M.5.5h12v8H.5zM6.5.5v5" /></svg>
          </ViewBtn>
          <ZoomSign>−</ZoomSign>
          <ZoomTrack />
          <ZoomSign>+</ZoomSign>
          <ZoomPct>100%</ZoomPct>
        </StatusTools>
      </Status>
      <BlackBand />
    </Frame>
  );
}
